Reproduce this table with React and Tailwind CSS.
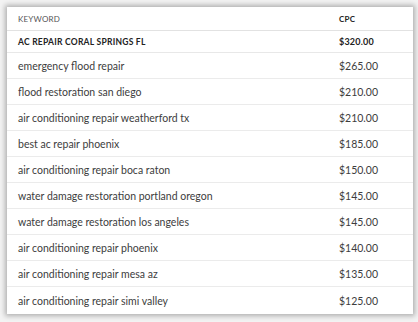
import React from "react";

const rows = [
  ["emergency flood repair", "$265.00"],
  ["flood restoration san diego", "$210.00"],
  ["air conditioning repair weatherford tx", "$210.00"],
  ["best ac repair phoenix", "$185.00"],
  ["air conditioning repair boca raton", "$150.00"],
  ["water damage restoration portland oregon", "$145.00"],
  ["water damage restoration los angeles", "$145.00"],
  ["air conditioning repair phoenix", "$140.00"],
  ["air conditioning repair mesa az", "$135.00"],
  ["air conditioning repair simi valley", "$125.00"],
];

export default function App() {
  return (
    <div className="w-[418px] h-[322px] bg-[#f3f3f3] pt-[7px] pl-[7px] pr-[5px]" style={{ fontFamily: "Lato, 'Open Sans', sans-serif" }}>
      <div className="w-[406px] h-[307px] bg-white shadow-[0_0_5px_2px_rgba(0,0,0,0.28)] text-[#333]">
        <div className="flex items-center h-[24px] pt-[1px] border-b border-[#e2e2e2] pl-[11px] text-[8px] tracking-[0.2px]">
          <div className="flex-1 text-[#555]">KEYWORD</div>
          <div className="w-[74px] font-bold text-[#222]">CPC</div>
        </div>
        <div className="flex items-center h-[22px] pt-[1px] border-b border-[#e8e8e8] pl-[11px] text-[8.5px] tracking-[0.25px] font-bold text-[#222]">
          <div className="flex-1">AC REPAIR CORAL SPRINGS FL</div>
          <div className="w-[74px] tracking-[0.2px] text-[9px]">$320.00</div>
        </div>
        {rows.map(([k, v], i) => (
          <div key={i} className={`flex items-center pt-[2px] pl-[11px] text-[10.5px] text-[#3d3d3d] ${i < rows.length - 1 ? "h-[26px] border-b border-[#ebebeb]" : "h-[27px]"}`}>
            <div className="flex-1">{k}</div>
            <div className="w-[74px]">{v}</div>
          </div>
        ))}
      </div>
    </div>
  );
}
